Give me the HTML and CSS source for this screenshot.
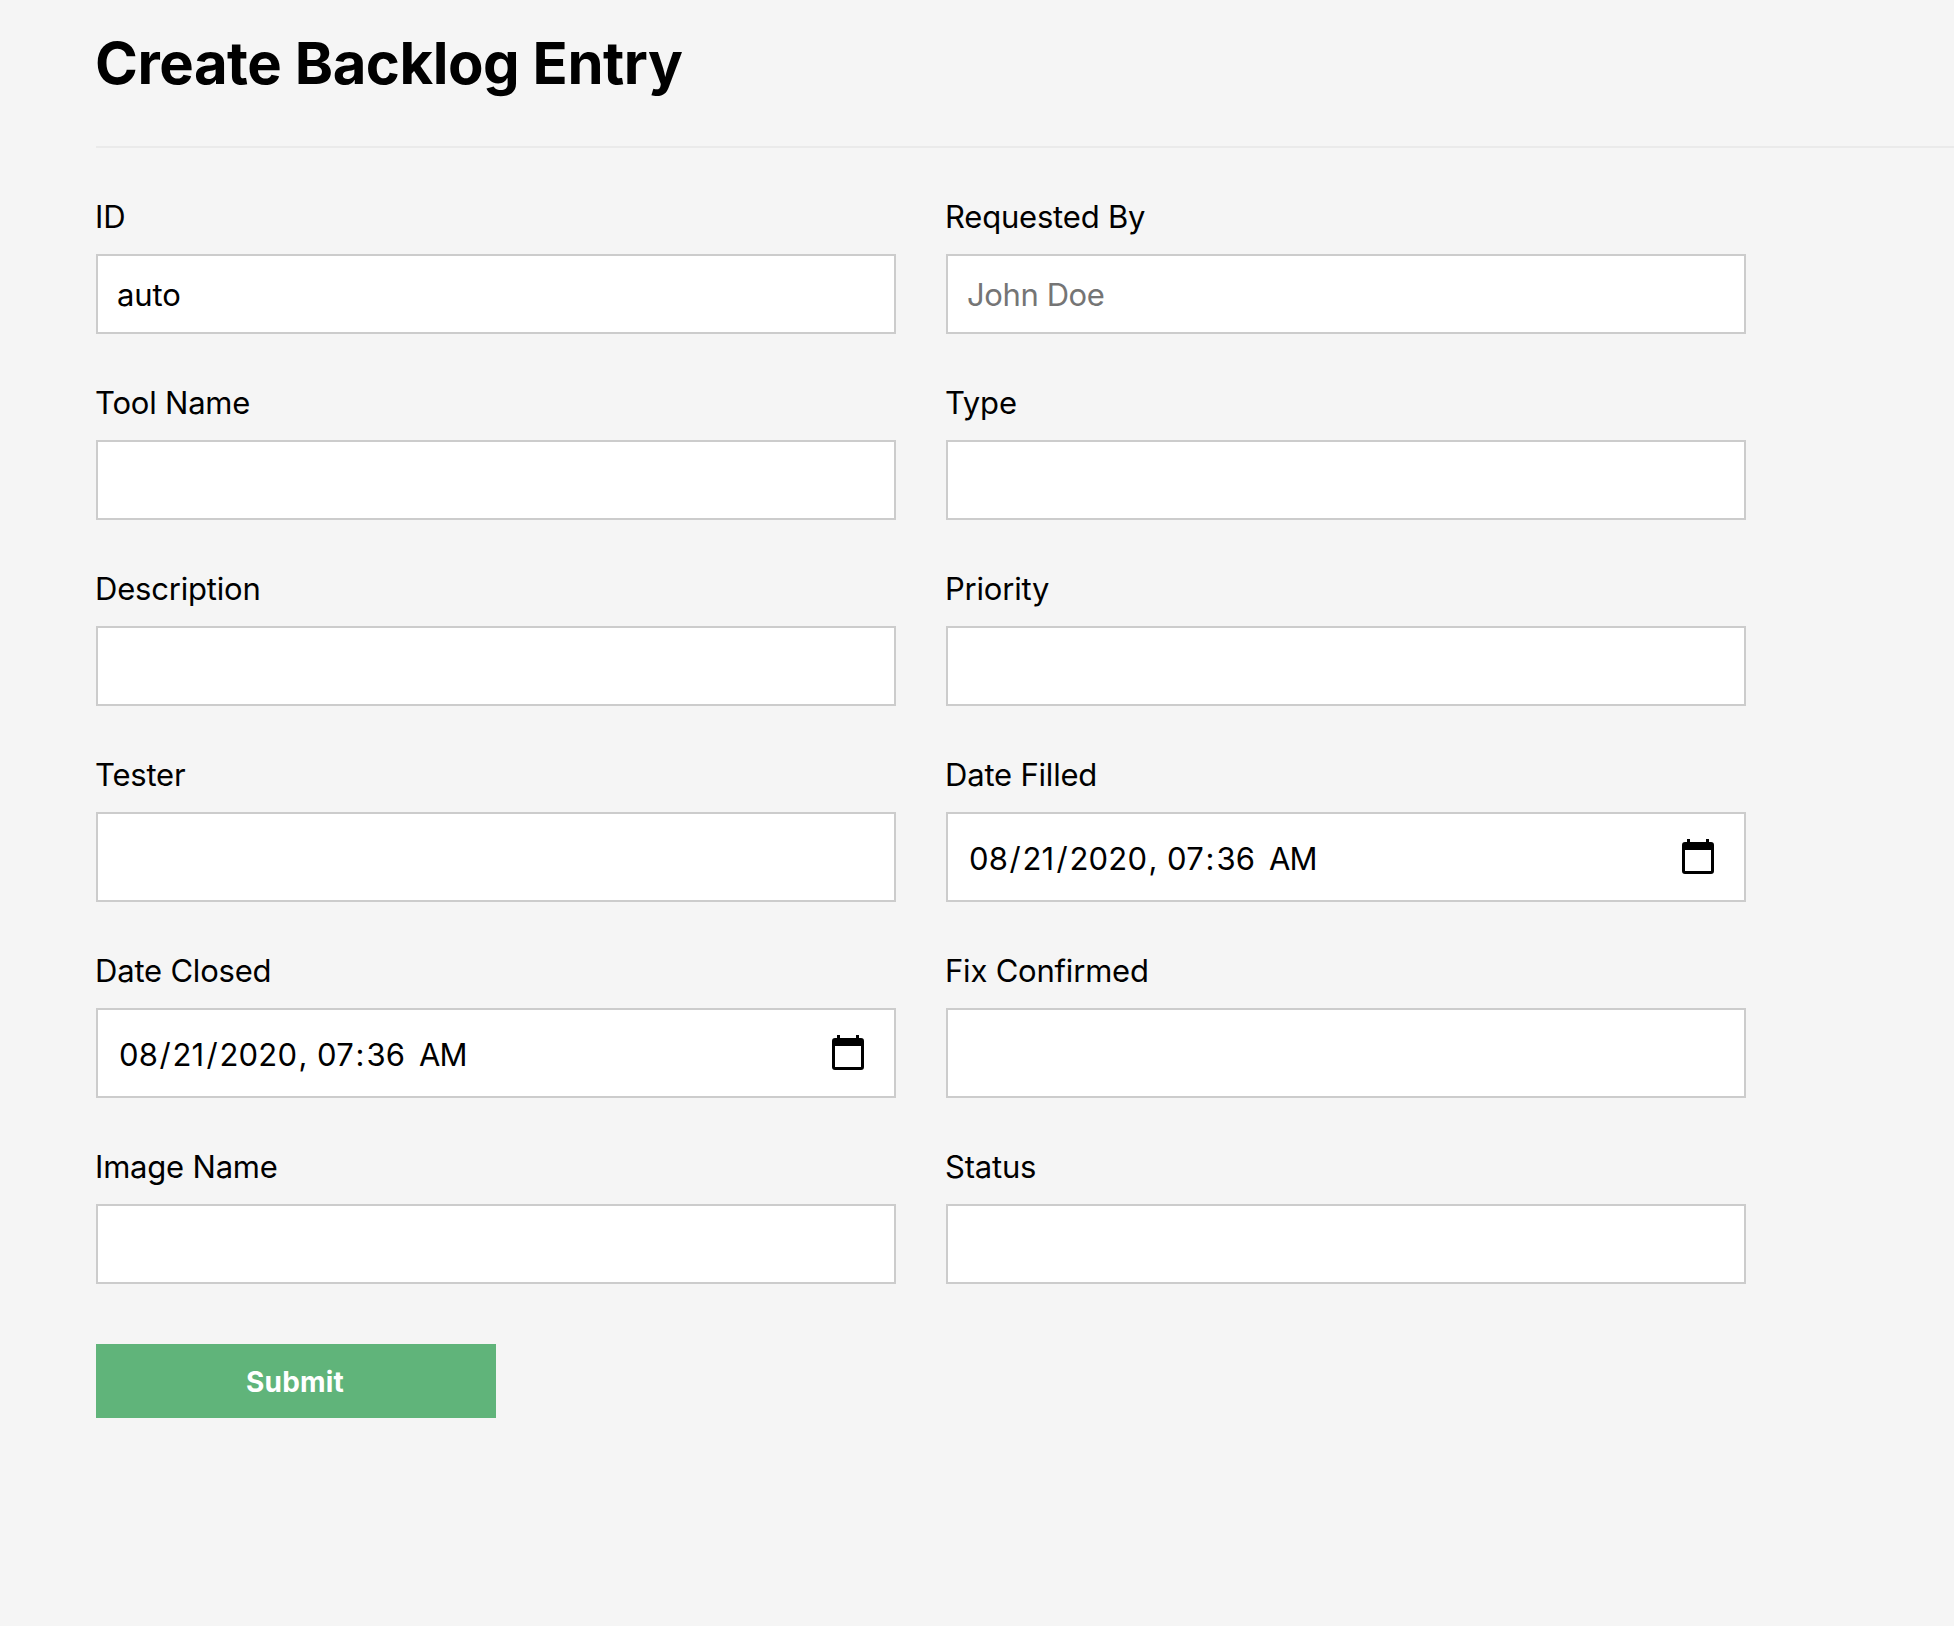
FILE: index.html
```html
<!DOCTYPE html>
<html lang="en">
<head>
<meta charset="utf-8">
<title>Create Backlog Entry</title>
<link rel="stylesheet" href="styles.css">
</head>
<body>
<main class="page">
  <h1 class="title">Create Backlog Entry</h1>
  <form class="form">
    <div class="fields">
      <label class="field"><span class="label">ID</span><input class="control control-value" type="text" value="auto"></label>
      <label class="field"><span class="label">Requested By</span><input class="control" type="text" placeholder="John Doe"></label>
      <label class="field"><span class="label">Tool Name</span><input class="control" type="text"></label>
      <label class="field"><span class="label">Type</span><input class="control" type="text"></label>
      <label class="field"><span class="label">Description</span><input class="control" type="text"></label>
      <label class="field"><span class="label">Priority</span><input class="control" type="text"></label>
      <label class="field"><span class="label">Tester</span><input class="control control-tall" type="text"></label>
      <div class="field"><span class="label">Date Filled</span>
        <div class="control control-tall date">
          <span class="date-value"><span class="month">08</span><span class="slash">/</span><span class="day">21</span><span class="slash">/</span><span class="year">2020</span><span class="comma">,</span><span class="hour">07</span><span class="colon">:</span><span class="minute">36</span><span class="meridiem">AM</span></span>
          <svg class="calendar" viewBox="0 0 32 36"><path fill-rule="evenodd" d="M5 0h3v3h16V0h3v3h2a3 3 0 0 1 3 3v26a3 3 0 0 1-3 3H3a3 3 0 0 1-3-3V6a3 3 0 0 1 3-3h2zM3 11v21h26V11z"/></svg>
        </div>
      </div>
      <div class="field"><span class="label">Date Closed</span>
        <div class="control control-tall date">
          <span class="date-value"><span class="month">08</span><span class="slash">/</span><span class="day">21</span><span class="slash">/</span><span class="year">2020</span><span class="comma">,</span><span class="hour">07</span><span class="colon">:</span><span class="minute">36</span><span class="meridiem">AM</span></span>
          <svg class="calendar" viewBox="0 0 32 36"><path fill-rule="evenodd" d="M5 0h3v3h16V0h3v3h2a3 3 0 0 1 3 3v26a3 3 0 0 1-3 3H3a3 3 0 0 1-3-3V6a3 3 0 0 1 3-3h2zM3 11v21h26V11z"/></svg>
        </div>
      </div>
      <label class="field"><span class="label">Fix Confirmed</span><input class="control control-tall" type="text"></label>
      <label class="field"><span class="label">Image Name</span><input class="control" type="text"></label>
      <label class="field"><span class="label">Status</span><input class="control" type="text"></label>
    </div>
    <button class="submit" type="button">Submit</button>
  </form>
</main>
</body>
</html>
```
FILE: styles.css
```css
* { box-sizing: border-box; }

body {
  margin: 0;
  background: #f5f5f5;
  color: #000;
  font-family: Inter, "Liberation Sans", sans-serif;
  font-size: 31px;
}

.page { padding-left: 96px; }

.title {
  margin: 0;
  height: 148px;
  padding-top: 28px;
  border-bottom: 2px solid #eaeaea;
  font-size: 58px;
  font-weight: 700;
  line-height: 70px;
  letter-spacing: -0.45px;
  text-indent: -1px;
}

.form { padding-top: 50px; }

.fields {
  display: grid;
  grid-template-columns: 800px 800px;
  column-gap: 50px;
  row-gap: 50px;
}

.field {
  display: flex;
  flex-direction: column;
  gap: 18px;
}

.label {
  line-height: 38px;
  letter-spacing: -0.2px;
  text-indent: -1px;
}

.control {
  width: 100%;
  height: 80px;
  padding: 1px 19px 0;
  border: 2px solid #ccc;
  border-radius: 0;
  outline: 0;
  background: #fff;
  color: #000;
  font: inherit;
  letter-spacing: -0.4px;
}

.control-value { letter-spacing: -0.1px; }

.control::placeholder { color: #757575; }

.control-tall { height: 90px; }

.date {
  display: flex;
  align-items: center;
  justify-content: space-between;
  padding: 0 30px 0 21px;
}

.date-value {
  display: flex;
  padding-top: 3px;
  letter-spacing: 0.2px;
}

.month { width: 40.5px; }
.slash { width: 13px; }
.day { width: 34px; }
.year { width: 79px; }
.comma { width: 18.5px; }
.hour { width: 38.5px; }
.colon { width: 11px; }
.minute { width: 52.5px; }
.meridiem { letter-spacing: -1px; }

.calendar {
  width: 32px;
  height: 36px;
}

.submit {
  display: block;
  width: 400px;
  height: 74px;
  margin-top: 60px;
  padding: 2px 2px 0 0;
  border: 0;
  background: #60b47a;
  color: #fff;
  font: 700 28px Inter, "Liberation Sans", sans-serif;
  letter-spacing: 0.2px;
}
```
